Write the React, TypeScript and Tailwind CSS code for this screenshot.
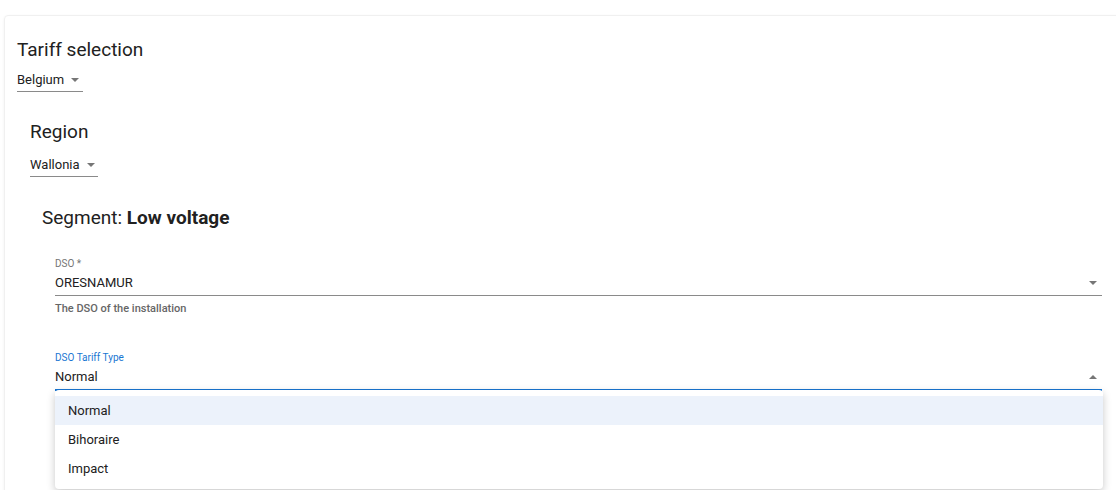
const font = { fontFamily: "Roboto, 'Liberation Sans', sans-serif" };

const Caret = ({ up = false }: { up?: boolean }) => (
  <svg width="8" height="4" viewBox="0 0 8 4" className={up ? "rotate-180" : ""}>
    <path d="M0 0 L8 0 L4 4 Z" fill="#767676" />
  </svg>
);

const SmallSelect = ({ value, width }: { value: string; width: string }) => (
  <div className={`flex items-center gap-[7px] h-[24px] border-b border-[#8a8a8a] ${width}`}>
    <span className="text-[13px] text-[#212121]">{value}</span>
    <Caret />
  </div>
);

const OPTIONS = ["Normal", "Bihoraire", "Impact"];

export default function App() {
  return (
    <div className="w-[1116px] h-[490px] overflow-hidden bg-white" style={font}>
      <div className="ml-[4px] mt-[15px] w-[1200px] h-[600px] rounded-[4px] border border-[#f0f0f0] shadow-[0_1px_3px_rgba(0,0,0,0.06)] pt-[22px] pl-[12px]">
        <h2 className="text-[19px] leading-[24px] text-[#212121]">Tariff selection</h2>
        <div className="mt-[6px]">
          <SmallSelect value="Belgium" width="w-[66px]" />
        </div>

        <div className="pl-[13px] mt-[28px]">
          <h3 className="text-[19px] leading-[24px] text-[#212121]">Region</h3>
          <div className="mt-[9px]">
            <SmallSelect value="Wallonia" width="w-[68px]" />
          </div>

          <div className="pl-[12px] mt-[29px]">
            <h4 className="text-[19px] leading-[24px] text-[#212121]">
              Segment: <span className="font-bold">Low voltage</span>
            </h4>

            <div className="pl-[13px] pr-[13px] mt-[28px] w-[1073px] relative">
              <div className="text-[10px] leading-[12px] text-[#757575]">DSO *</div>
              <div className="flex items-center justify-between h-[26px] border-b border-[#8a8a8a]">
                <span className="text-[13px] text-[#212121]">ORESNAMUR</span>
                <span className="mr-[5px] flex"><Caret /></span>
              </div>
              <div className="text-[11px] font-medium leading-[14px] text-[#666] mt-[6px]">
                The DSO of the installation
              </div>

              <div className="text-[10px] leading-[12px] text-[#1976d2] mt-[36px]">DSO Tariff Type</div>
              <div className="flex items-center justify-between h-[27px] border-b-2 border-[#1976d2]">
                <span className="text-[13px] text-[#212121]">Normal</span>
                <span className="mr-[5px] flex"><Caret up /></span>
              </div>

              <div className="absolute left-[13px] top-[132px] w-[1048px] bg-white rounded-[4px] shadow-[0_3px_8px_rgba(0,0,0,0.22)] py-[6px]">
                {OPTIONS.map((o, i) => (
                  <div
                    key={o}
                    className={`h-[29px] flex items-center px-[13px] text-[13px] text-[#212121] ${
                      i === 0 ? "bg-[#ecf2fb]" : ""
                    }`}
                  >
                    {o}
                  </div>
                ))}
              </div>
            </div>
          </div>
        </div>
      </div>
    </div>
  );
}
